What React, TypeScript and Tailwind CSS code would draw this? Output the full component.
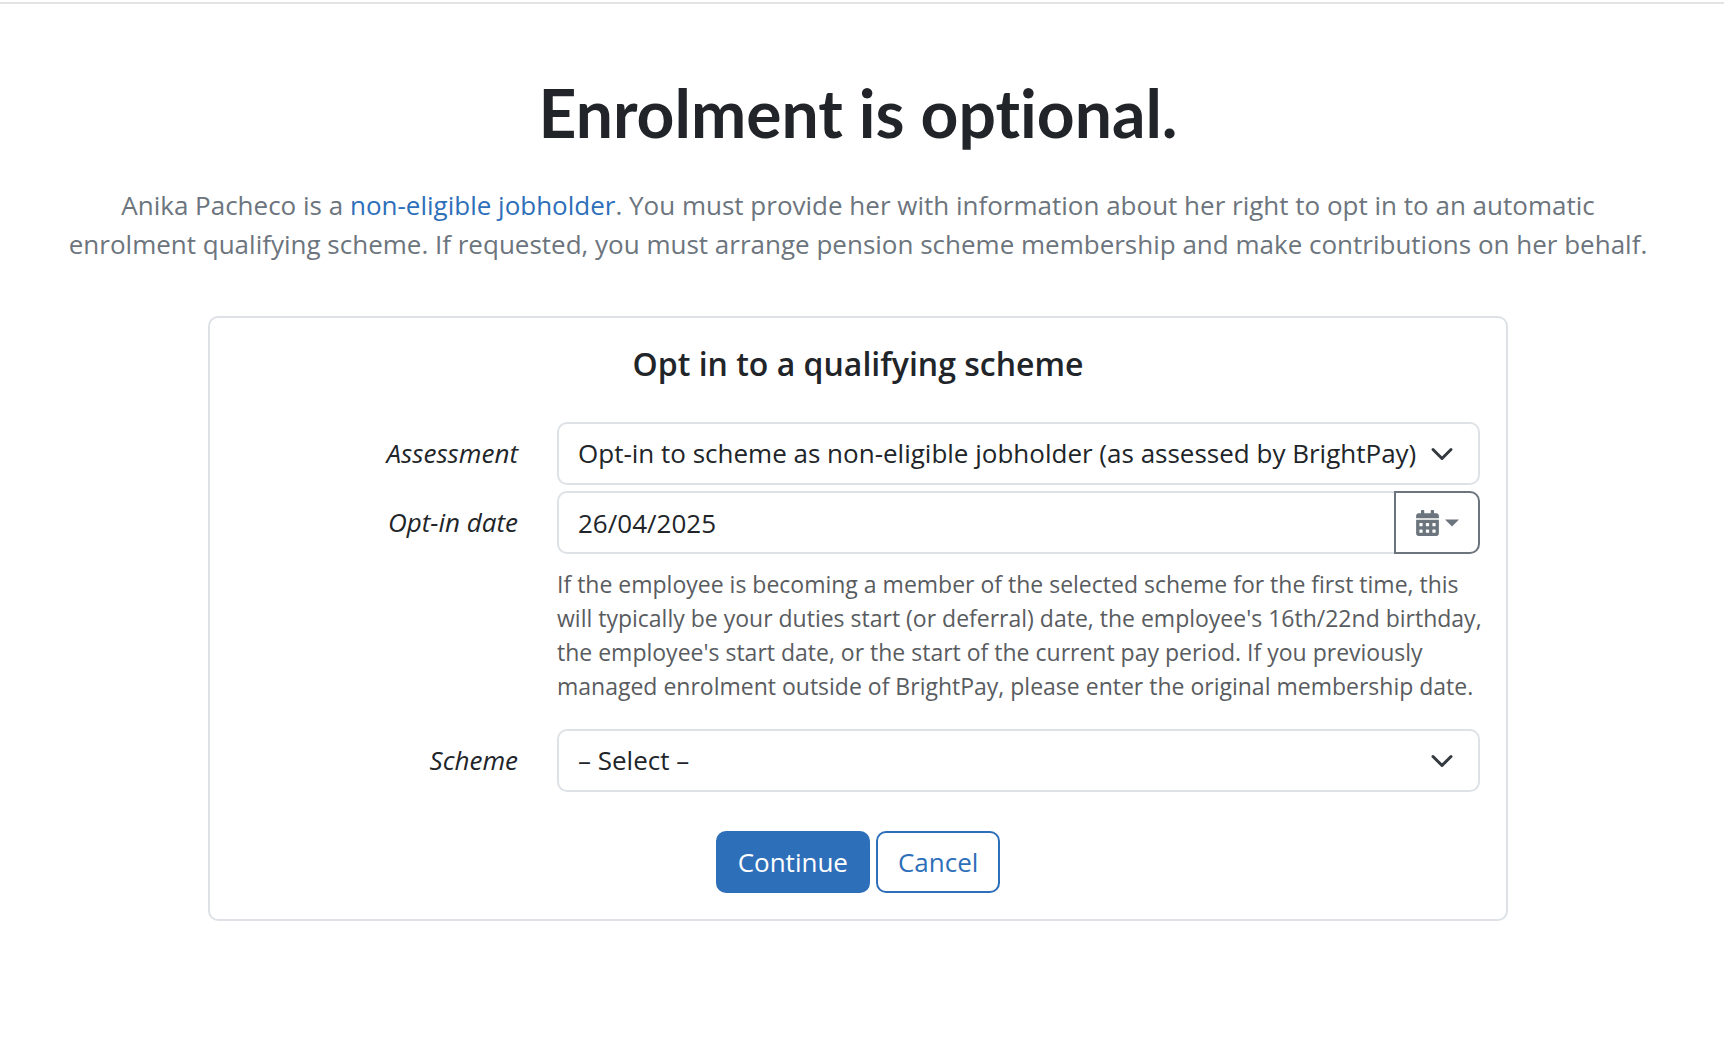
import React, { useState } from 'react';
import { FaCalendarAlt } from 'react-icons/fa';

const rowClass = 'grid grid-cols-[1fr_923px] text-left';
const labelClass = 'pt-4 pr-[39px] text-right text-[26px] leading-[30px] italic';
const fieldClass =
  'h-[63px] w-full border-2 border-[#dee2e6] bg-white pl-[19px] text-[26px] leading-[39px] text-[#212529] outline-none';
const buttonClass =
  'h-[62px] rounded-[10px] border-2 border-[#2e6fba] px-5 text-[26px] leading-[39px]';

const Chevron = () => (
  <svg
    className="pointer-events-none absolute top-5 right-[26px] h-6 w-6"
    viewBox="0 0 16 16"
    aria-hidden="true"
  >
    <path
      d="m2 5 6 6 6-6"
      fill="none"
      stroke="#343a40"
      strokeLinecap="round"
      strokeLinejoin="round"
      strokeWidth="2"
    />
  </svg>
);

const Select = ({ id, options }: { id: string; options: string[] }) => (
  <div className="relative">
    <select id={id} className={`${fieldClass} appearance-none rounded-[10px]`}>
      {options.map((option) => (
        <option key={option}>{option}</option>
      ))}
    </select>
    <Chevron />
  </div>
);

const App = () => {
  const [date, setDate] = useState('26/04/2025');

  return (
    <main className="pt-0.5 font-['Open_Sans',sans-serif] text-[#212529]">
      <div className="border-t-2 border-[#e3e3e3] pt-[70px] pr-[68px] pb-20 pl-[60px] text-center">
        <h1 className="font-['Lato',sans-serif] text-[66px] leading-[77px] font-bold [font-variant-ligatures:none]">
          Enrolment is optional.
        </h1>
        <p className="mt-[35px] text-[26px] leading-[39px] text-[#6c757d]">
          Anika Pacheco is a{' '}
          <a href="#jobholder" className="text-[#2e6fba]">
            non-eligible jobholder
          </a>
          . You must provide her with information about her right to opt in to an automatic enrolment
          qualifying scheme. If requested, you must arrange pension scheme membership and make
          contributions on her behalf.
        </p>

        <form
          className="mx-auto mt-[52px] max-w-[1300px] rounded-[10px] border-2 border-[#dee2e6] p-[26px]"
          onSubmit={(e) => e.preventDefault()}
        >
          <h2 className="text-[32px] leading-[39px] font-semibold">Opt in to a qualifying scheme</h2>

          <div className={`${rowClass} mt-[39px]`}>
            <label htmlFor="assessment" className={labelClass}>
              Assessment
            </label>
            <Select
              id="assessment"
              options={['Opt-in to scheme as non-eligible jobholder (as assessed by BrightPay)']}
            />
          </div>

          <div className={`${rowClass} mt-1.5`}>
            <label htmlFor="opt-in-date" className={labelClass}>
              Opt-in date
            </label>
            <div>
              <div className="flex">
                <input
                  id="opt-in-date"
                  type="text"
                  className={`${fieldClass} rounded-l-[10px] border-r-0`}
                  value={date}
                  onChange={(e) => setDate(e.target.value)}
                />
                <button
                  type="button"
                  aria-label="Choose date"
                  className="flex h-[63px] w-[86px] shrink-0 items-center justify-center gap-1.5 rounded-r-[10px] border-2 border-[#6c757d] text-[#6c757d]"
                >
                  <FaCalendarAlt className="h-[26px] w-[23px]" />
                  <svg className="h-2 w-3.5" viewBox="0 0 14 8" aria-hidden="true">
                    <path d="M0 .5h14l-7 7z" fill="currentColor" />
                  </svg>
                </button>
              </div>
              <p className="mt-[13px] -mr-3 text-[23px] leading-[34px] text-[#595c5f]">
                If the employee is becoming a member of the selected scheme for the first time, this
                will typically be your duties start (or deferral) date, the employee's 16th/22nd
                birthday, the employee's start date, or the start of the current pay period. If you
                previously managed enrolment outside of BrightPay, please enter the original
                membership date.
              </p>
            </div>
          </div>

          <div className={`${rowClass} mt-[26px]`}>
            <label htmlFor="scheme" className={labelClass}>
              Scheme
            </label>
            <Select id="scheme" options={['– Select –']} />
          </div>

          <div className="mt-[39px] flex justify-center gap-1.5">
            <button type="submit" className={`${buttonClass} bg-[#2e6fba] text-white`}>
              Continue
            </button>
            <button type="button" className={`${buttonClass} bg-white text-[#2e6fba]`}>
              Cancel
            </button>
          </div>
        </form>
      </div>
    </main>
  );
};

export default App;
